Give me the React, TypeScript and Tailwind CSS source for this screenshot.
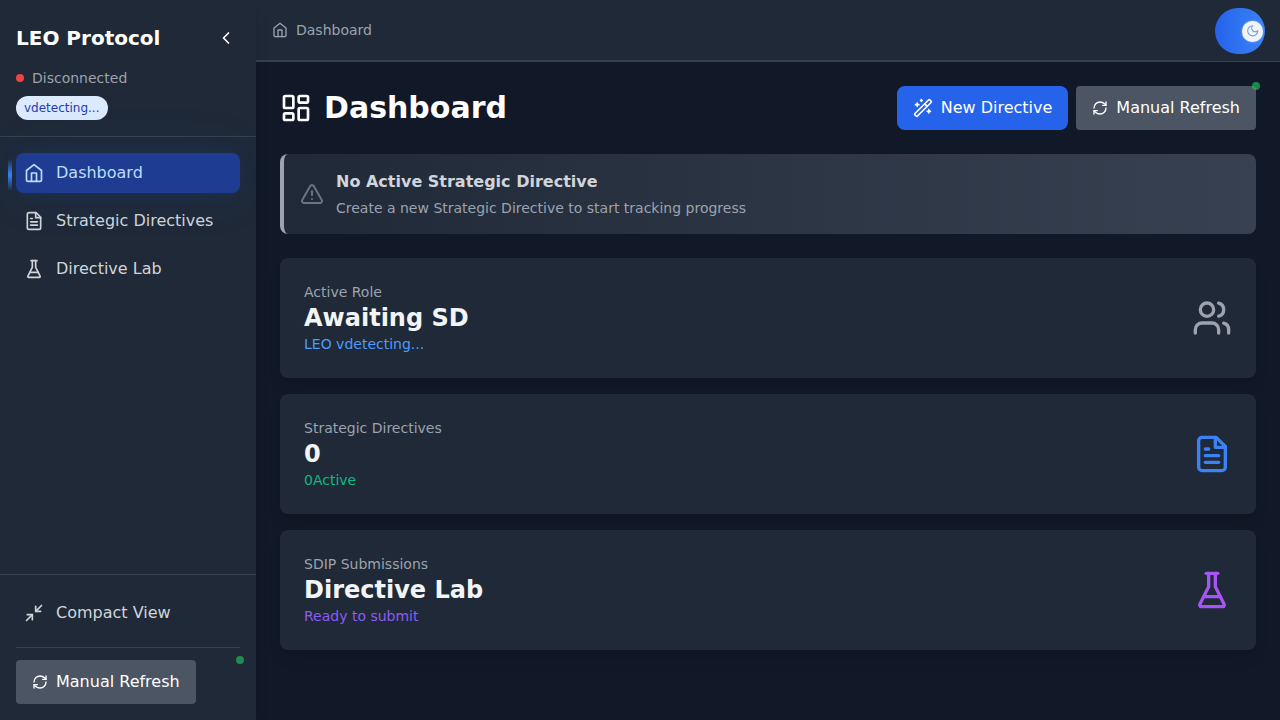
import React from 'react';
import { ChevronLeft, LayoutDashboard, Minimize2, RefreshCw, TriangleAlert, Users, WandSparkles } from 'lucide-react';

function Icon({ className, children }: { className?: string; children: React.ReactNode }) {
  return (
    <svg viewBox="0 0 24 24" fill="none" stroke="currentColor" strokeWidth="2" strokeLinecap="round" strokeLinejoin="round" className={className}>
      {children}
    </svg>
  );
}

function FileText({ className }: { className?: string }) {
  return (
    <Icon className={className}>
      <path d="M14.5 2H6a2 2 0 0 0-2 2v16a2 2 0 0 0 2 2h12a2 2 0 0 0 2-2V7.5L14.5 2z" />
      <polyline points="14 2 14 8 20 8" />
      <path d="M10 9H8" />
      <path d="M16 13H8" />
      <path d="M16 17H8" />
    </Icon>
  );
}

function Home({ className }: { className?: string }) {
  return (
    <Icon className={className}>
      <path d="m3 9 9-7 9 7v11a2 2 0 0 1-2 2H5a2 2 0 0 1-2-2z" />
      <polyline points="9 22 9 12 15 12 15 22" />
    </Icon>
  );
}

function Flask({ className }: { className?: string }) {
  return (
    <Icon className={className}>
      <path d="M10 2v7.527a2 2 0 0 1-.211.896L4.72 20.55a1 1 0 0 0 .9 1.45h12.76a1 1 0 0 0 .9-1.45l-5.069-10.127A2 2 0 0 1 14 9.527V2" />
      <path d="M8.5 2h7" />
      <path d="M7 16h10" />
    </Icon>
  );
}

function Moon({ className }: { className?: string }) {
  return (
    <Icon className={className}>
      <path d="M12 3a6 6 0 0 0 9 9 9 9 0 1 1-9-9Z" />
    </Icon>
  );
}

function RefreshButton() {
  return (
    <button className="flex h-11 items-center gap-2 rounded bg-[#4b5563] px-4 text-white">
      <RefreshCw className="size-4" />
      <span className="whitespace-nowrap">Manual Refresh</span>
    </button>
  );
}

function StatCard({ label, value, note, noteClass, icon }: { label: string; value: string; note: string; noteClass: string; icon: React.ReactNode }) {
  return (
    <section className="flex h-[120px] items-center justify-between rounded-lg bg-[#1f2937] p-6 shadow-lg">
      <div>
        <p className="text-sm text-[#9ca3af]">{label}</p>
        <p className="text-2xl font-bold text-[#f3f4f6]">{value}</p>
        <p className={noteClass}>{note}</p>
      </div>
      {icon}
    </section>
  );
}

export default function App() {
  return (
    <div className="flex h-[720px] w-[1280px] overflow-hidden bg-[#111827] font-['DejaVu_Sans',sans-serif] text-base text-[#d1d5db]">
      <aside className="relative z-10 flex w-64 shrink-0 flex-col overflow-hidden bg-[#1f2937] shadow-lg">
        <div className="h-[137px] border-b border-[#374151] p-4">
          <div className="flex h-11 items-center justify-between">
            <h1 className="text-xl font-bold text-white">LEO Protocol</h1>
            <button className="p-1 text-white"><ChevronLeft className="size-5" /></button>
          </div>
          <div className="mt-2 flex items-center gap-2 text-sm text-[#9ca3af]">
            <span className="size-2 rounded-full bg-[#ef4444]" />
            <span>Disconnected</span>
          </div>
          <div className="mt-2 flex">
            <span className="rounded-full bg-[#dbeafe] px-2 py-1 text-xs text-[#1e40af]">vdetecting...</span>
          </div>
        </div>
        <nav className="flex flex-1 flex-col gap-2 p-4">
          <a className="relative flex h-10 items-center gap-3 rounded-lg bg-[#1e3c91] px-2 text-[#bfdbfe] shadow-[0_0_20px_rgba(37,99,235,0.08),0_0_50px_rgba(37,99,235,0.12)]">
            <span className="absolute -left-2 top-1.5 h-8 w-1 bg-linear-to-b from-transparent via-[#3b82f6] to-transparent" />
            <Home className="size-5" />
            <span>Dashboard</span>
          </a>
          <a className="flex h-10 items-center gap-3 px-2"><FileText className="size-5" /><span>Strategic Directives</span></a>
          <a className="flex h-10 items-center gap-3 px-2"><Flask className="size-5" /><span>Directive Lab</span></a>
        </nav>
        <div className="h-[146px] border-t border-[#374151] px-4 pt-[18px]">
          <button className="flex h-10 w-full items-center gap-3 px-2"><Minimize2 className="size-5" /><span>Compact View</span></button>
          <div className="relative mt-[14px] border-t border-[#374151] pt-3">
            <RefreshButton />
            <span className="absolute -right-1 top-2 size-2 rounded-full bg-[#22c55e]/65" />
          </div>
        </div>
      </aside>
      <div className="flex min-w-0 flex-1 flex-col">
        <header className="flex h-[62px] shrink-0 border-b border-[#374151] bg-[#1f2937]">
          <div className="flex w-[944px] items-center gap-2 border-b border-[#374151] px-4 text-sm text-[#9ca3af]">
            <Home className="size-4" />
            <span>Dashboard</span>
          </div>
          <div className="flex w-20 items-start pl-[15px] pt-2">
            <button className="flex h-[46px] w-[50px] items-center justify-end rounded-full bg-linear-to-r from-[#2563eb] to-[#3b82f6] pr-0.5">
              <span className="flex size-[21px] items-center justify-center rounded-full bg-[#f3f4f6] text-[#6f9fee] shadow-[0_0_2px_rgba(255,255,255,0.6)]"><Moon className="size-[13.5px]" /></span>
            </button>
          </div>
        </header>
        <main className="flex flex-1 flex-col px-6 pt-6">
          <div className="flex h-11 items-center justify-between">
            <h2 className="flex items-center gap-3 text-3xl font-bold text-white"><LayoutDashboard className="size-8" />Dashboard</h2>
            <div className="flex gap-2">
              <button className="flex h-11 items-center gap-2 rounded-lg bg-[#2563eb] px-4 text-white"><WandSparkles className="size-5" /><span className="whitespace-nowrap">New Directive</span></button>
              <div className="relative">
                <RefreshButton />
                <span className="absolute -right-1 -top-1 size-2 rounded-full bg-[#22c55e]/65" />
              </div>
            </div>
          </div>
          <section className="mt-6 flex h-20 items-center gap-3 rounded-lg border-l-4 border-[#9ca3af] bg-linear-to-r from-[#1f2937] to-[#374151] px-4">
            <TriangleAlert className="size-6 text-[#6b7280]" />
            <div>
              <h3 className="font-semibold text-[#d1d5db]">No Active Strategic Directive</h3>
              <p className="mt-1 text-sm text-[#9ca3af]">Create a new Strategic Directive to start tracking progress</p>
            </div>
          </section>
          <div className="mt-6 flex flex-col gap-4">
            <StatCard label="Active Role" value="Awaiting SD" note="LEO vdetecting..." noteClass="text-sm text-[#4d9bfa]" icon={<Users className="size-10 text-[#9ca3af]" />} />
            <StatCard label="Strategic Directives" value="0" note="0Active" noteClass="text-sm text-[#10b981]" icon={<FileText className="size-10 text-[#3b82f6]" />} />
            <StatCard label="SDIP Submissions" value="Directive Lab" note="Ready to submit" noteClass="text-sm text-[#8b5cf6]" icon={<Flask className="size-10 text-[#a855f7]" />} />
          </div>
        </main>
      </div>
    </div>
  );
}
